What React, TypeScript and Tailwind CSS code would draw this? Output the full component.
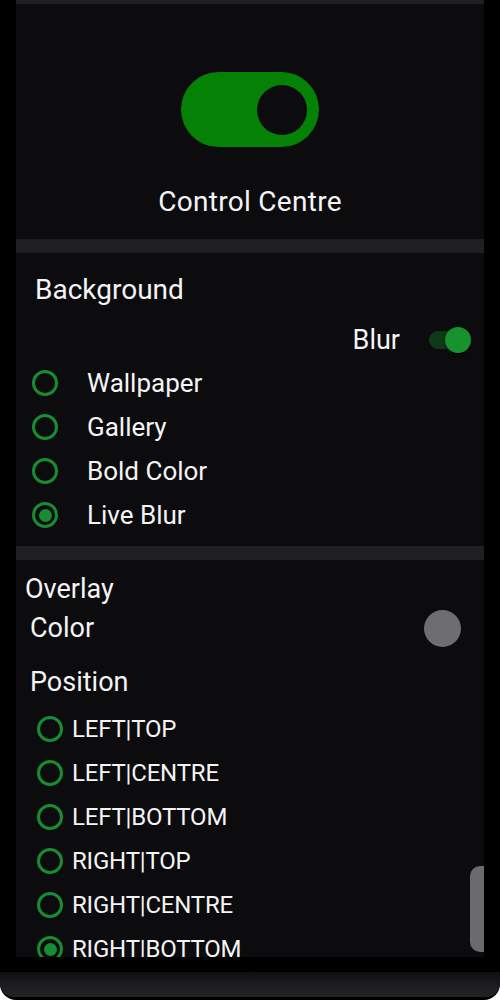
import React from "react";

const font = { fontFamily: "Roboto, 'Noto Sans', sans-serif" };

function Radio({ checked }: { checked?: boolean }) {
  return (
    <span className="flex h-[26px] w-[26px] shrink-0 items-center justify-center rounded-full border-[3px] border-[#178c31]">
      {checked && <span className="h-[13px] w-[13px] rounded-full bg-[#178c31]" />}
    </span>
  );
}

const backgrounds = [
  { label: "Wallpaper" },
  { label: "Gallery" },
  { label: "Bold Color" },
  { label: "Live Blur", checked: true },
];

const positions = [
  "LEFT|TOP",
  "LEFT|CENTRE",
  "LEFT|BOTTOM",
  "RIGHT|TOP",
  "RIGHT|CENTRE",
  "RIGHT|BOTTOM",
];

export default function App() {
  return (
    <div className="h-[1000px] w-[500px] overflow-hidden bg-white" style={font}>
      <div className="flex h-full flex-col rounded-b-[16px] bg-black pb-[3px]">
        <div className="relative mx-4 flex h-[957px] shrink-0 flex-col overflow-hidden bg-[#0c0b0e] text-[#f4f4f4]">
          <div className="h-[4px] shrink-0 bg-[#1f1e21]" />

          {/* hero */}
          <div className="flex h-[235px] shrink-0 flex-col items-center pt-[68px]">
            <div className="flex h-[75px] w-[138px] items-center justify-end rounded-full bg-[#058105] pr-[12px]">
              <span className="h-[50px] w-[50px] rounded-full bg-[#0c0b0e]" />
            </div>
            <div className="mt-[38px] text-[28px] leading-[34px] tracking-[0.3px]">Control Centre</div>
          </div>

          <div className="h-[14px] shrink-0 bg-[#1f1e21]" />

          {/* background */}
          <div className="flex h-[293px] shrink-0 flex-col pt-[20px]">
            <div className="pl-[19px] text-[28px] leading-[34px]">Background</div>
            <div className="mt-[11px] flex h-[43px] items-center justify-end pr-[13px]">
              <span className="text-[27px] leading-[32px]">Blur</span>
              <div className="relative ml-[29px] flex h-[26px] w-[42px] items-center">
                <span className="h-[18px] w-[24px] rounded-l-full bg-[#0e3a19]" />
                <span className="absolute right-0 top-0 h-[26px] w-[26px] rounded-full bg-[#16932f] shadow-[0_1px_3px_rgba(0,0,0,0.5)]" />
              </div>
            </div>
            {backgrounds.map((b) => (
              <div key={b.label} className="flex h-[44px] items-center pl-[16px]">
                <Radio checked={b.checked} />
                <span className="ml-[29px] text-[26px] leading-[32px]">{b.label}</span>
              </div>
            ))}
          </div>

          <div className="h-[14px] shrink-0 bg-[#1f1e21]" />

          {/* overlay */}
          <div className="flex flex-col pt-[12px]">
            <div className="pl-[9px] text-[27px] leading-[34px]">Overlay</div>
            <div className="flex h-[44px] items-center justify-between pl-[14px] pr-[23px]">
              <span className="text-[27px] leading-[32px]">Color</span>
              <span className="h-[37px] w-[37px] rounded-full bg-[#6e6d71]" />
            </div>
            <div className="mt-[15px] pl-[14px] text-[27px] leading-[34px]">Position</div>
            <div className="mt-[8px] flex flex-col">
              {positions.map((p, i) => (
                <div key={p} className="flex h-[44px] items-center pl-[21px]">
                  <Radio checked={i === positions.length - 1} />
                  <span className="ml-[9px] text-[24px] leading-[32px] tracking-[-0.2px]">{p}</span>
                </div>
              ))}
            </div>
          </div>

          <div className="absolute right-0 top-[866px] h-[86px] w-[14px] rounded-l-[10px] bg-[#6b6a6e]" />
        </div>

        <div className="mt-[15px] h-[25px] shrink-0 rounded-b-[14px] bg-gradient-to-b from-[#0e0d10] via-[#1c1b1e] to-[#232225]" />
      </div>
    </div>
  );
}
